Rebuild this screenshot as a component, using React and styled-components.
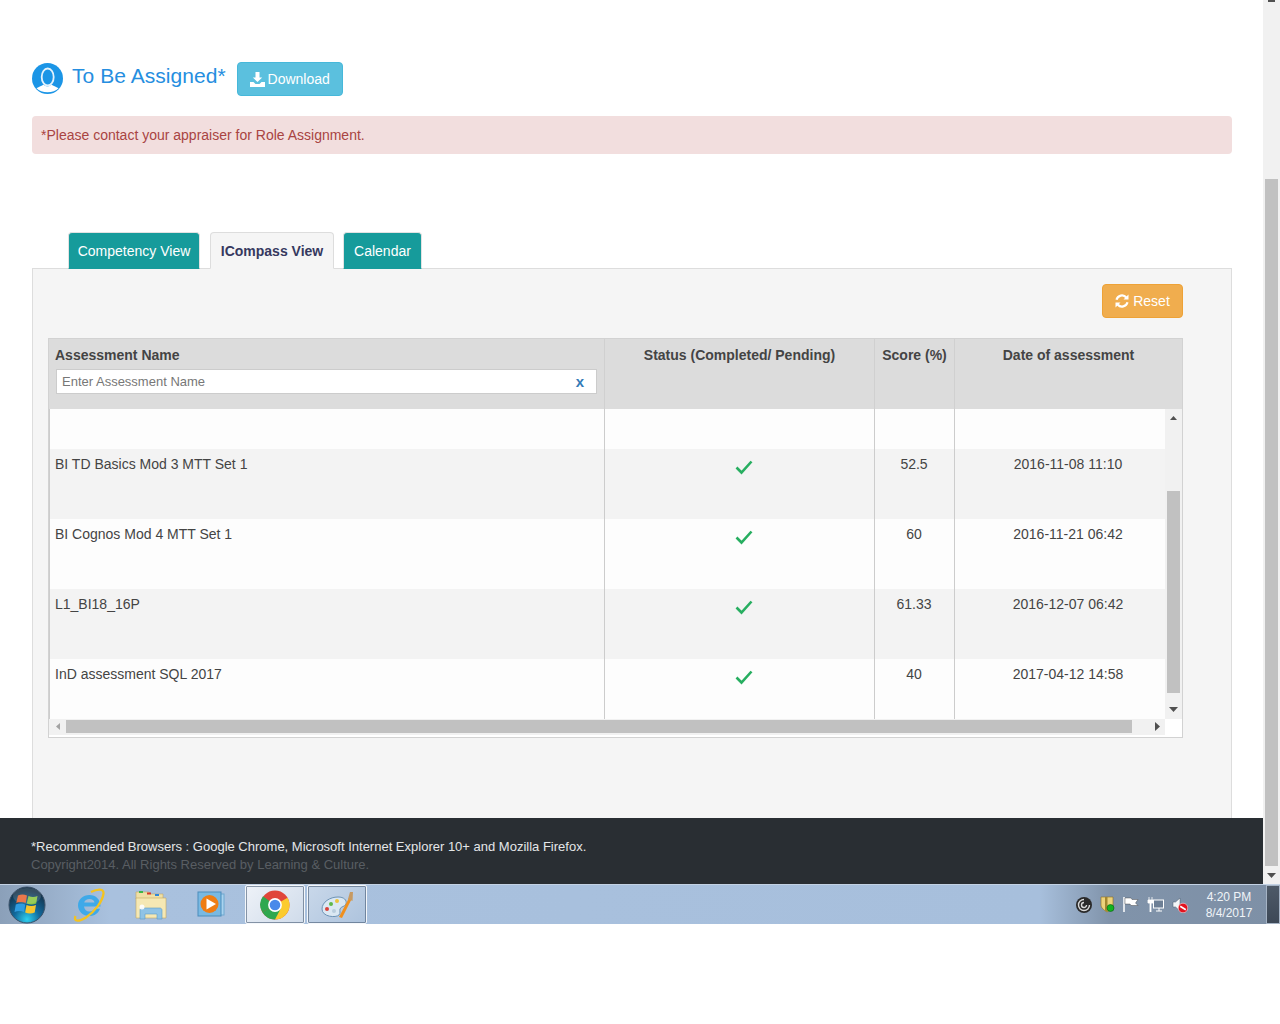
import React from 'react'
import styled, { createGlobalStyle } from 'styled-components'

const Global = createGlobalStyle`
  html, body { margin: 0; padding: 0; background: #fff; }
  body { font-family: "Liberation Sans", Arial, sans-serif; font-size: 14px; color: #333; }
`

const Screen = styled.div`
  width: 1280px;
  height: 1024px;
  display: flex;
  flex-direction: column;
  overflow: hidden;
  background: #fff;
`
const Viewport = styled.div`
  display: flex;
  height: 884px;
`
const Content = styled.main`
  width: 1263px;
  display: flex;
  flex-direction: column;
`
const Wrapper = styled.div`
  flex: 1;
  padding: 62px 31px 0 32px;
  display: flex;
  flex-direction: column;
`
const Heading = styled.div`
  display: flex;
  align-items: flex-start;
  height: 34px;
`
const Avatar = styled.svg`
  width: 31px;
  height: 31px;
  margin: 1px 9px 0 0;
`
const Title = styled.h2`
  margin: 1px 11px 0 0;
  font-size: 21px;
  line-height: 25px;
  font-weight: 400;
  letter-spacing: 0.05px;
  color: #258ee0;
`
const Button = styled.button`
  display: flex;
  align-items: center;
  justify-content: center;
  gap: ${p => p.$gap}px;
  height: 34px;
  width: ${p => p.$width}px;
  padding: 0;
  border-radius: 4px;
  border: 1px solid ${p => p.$border};
  background: ${p => p.$bg};
  color: #fff;
  font-family: inherit;
  font-size: 14px;
`
const Alert = styled.div`
  margin-top: 20px;
  height: 38px;
  box-sizing: border-box;
  padding: 0 9px;
  line-height: 38px;
  background: #f2dede;
  border-radius: 4px;
  color: #a94442;
`
const Tabs = styled.nav`
  display: flex;
  margin: 78px 0 -1px 36px;
  position: relative;
  height: 37px;
`
const Tab = styled.div`
  box-sizing: border-box;
  height: 37px;
  width: ${p => p.$width}px;
  margin-right: ${p => p.$gap}px;
  text-align: center;
  line-height: 37px;
  border-radius: 4px 4px 0 0;
  border: 1px solid ${p => (p.$active ? '#ddd' : '#e2e2e2')};
  border-bottom: 1px solid ${p => (p.$active ? '#f5f5f5' : '#169b9b')};
  background: ${p => (p.$active ? '#f5f5f5' : '#169b9b')};
  color: ${p => (p.$active ? '#36395f' : '#fff')};
  font-weight: ${p => (p.$active ? 700 : 400)};
`
const Panel = styled.section`
  flex: 1;
  box-sizing: border-box;
  background: #f5f5f5;
  border: 1px solid #ddd;
  border-bottom: 0;
  padding: 15px 48px 0 15px;
`
const PanelTools = styled.div`
  display: flex;
  justify-content: flex-end;
  margin-bottom: 20px;
`
const Table = styled.div`
  width: 1135px;
  height: 400px;
  box-sizing: border-box;
  border: 1px solid #d2d2d2;
  background: #fff;
`
const HeadRow = styled.div`
  display: grid;
  grid-template-columns: 556px 270px 80px 227px;
  height: 70px;
  background: #dcdcdc;
`
const HeadCell = styled.div`
  box-sizing: border-box;
  padding: 8px 6px 0;
  border-right: ${p => (p.$last ? '0' : '1px solid #d0d0d0')};
  text-align: ${p => (p.$left ? 'left' : 'center')};
  font-weight: 700;
  color: #444;
  line-height: 17px;
`
const Filter = styled.div`
  display: flex;
  align-items: center;
  justify-content: space-between;
  box-sizing: border-box;
  width: 541px;
  height: 25px;
  margin: 5px 0 0 1px;
  padding: 0 12px 0 5px;
  background: #fff;
  border: 1px solid #ccc;
  font-size: 13px;
  font-weight: 400;
  color: #777;
`
const Clear = styled.span`
  color: #337ab7;
  font-weight: 700;
  font-size: 15px;
`
const BodyWrap = styled.div`
  display: flex;
  height: 310px;
`
const Rows = styled.div`
  width: 1116px;
  border-left: 1px solid #ccc;
  box-sizing: border-box;
`
const Row = styled.div`
  display: grid;
  grid-template-columns: 555px 270px 80px 211px;
  height: ${p => p.$height}px;
  background: ${p => (p.$shade ? '#f3f3f3' : '#fdfdfd')};
`
const Cell = styled.div`
  box-sizing: border-box;
  padding: 5px 1px 0 0;
  padding-left: ${p => (p.$date ? '16px' : p.$status ? '10px' : p.$name ? '5px' : '0')};
  border-right: ${p => (p.$date ? '0' : '1px solid #ccc')};
  text-align: ${p => (p.$name ? 'left' : 'center')};
  line-height: 20px;
  color: #444;
`
const Check = styled.svg`
  width: 18px;
  height: 16px;
  margin-top: 5px;
`
const ScrollV = styled.div`
  width: ${p => p.$width}px;
  height: 100%;
  flex: none;
  background: #f1f1f1;
  display: flex;
  flex-direction: column;
  align-items: center;
`
const Thumb = styled.div`
  flex: none;
  background: #c1c1c1;
  width: ${p => p.$width || 'auto'};
  height: ${p => p.$height || 'auto'};
  margin: ${p => p.$margin || 0};
`
const ArrowBox = styled.div`
  display: flex;
  align-items: center;
  justify-content: center;
  flex: none;
  box-sizing: border-box;
  width: ${p => p.$width}px;
  height: ${p => p.$height}px;
  padding: ${p => p.$pad || 0};
`
const ScrollH = styled.div`
  display: flex;
  width: 1116px;
  height: 16px;
  background: #f1f1f1;
  align-items: flex-start;
`
const Tri = styled.svg`
  display: block;
  fill: ${p => p.$fill || '#505050'};
`
const Footer = styled.footer`
  height: 66px;
  box-sizing: border-box;
  background: #292e33;
  padding: 20px 31px 0;
  font-size: 13px;
  line-height: 18px;
  color: #e4e6e8;
`
const Copyright = styled.div`
  color: #595e63;
`
const PageScroll = styled(ScrollV)`
  height: 884px;
`
const Taskbar = styled.div`
  height: 40px;
  display: flex;
  align-items: stretch;
  background: linear-gradient(90deg, #8ba0b9 0, #a9c1de 110px, #a7bfdc 1040px, #8093aa 1110px, #7e90a6 100%);
  border-top: 1px solid #c3d2e4;
  box-sizing: border-box;
`
const Launcher = styled.div`
  width: ${p => p.$width}px;
  margin-left: ${p => p.$gap || 0}px;
  display: flex;
  align-items: center;
  justify-content: center;
  box-sizing: border-box;
  ${p => p.$open && `
    border: 1px solid #f4f7fb;
    border-radius: 2px;
    box-shadow: inset 0 0 0 1px rgba(70, 90, 115, .6);
    background: ${p.$open};
  `}
`
const StartButton = styled(Launcher)`
  justify-content: flex-start;
  padding-left: 8px;
`
const Tray = styled.div`
  margin-left: auto;
  display: flex;
  align-items: center;
  gap: 8px;
  padding-right: 6px;
`
const Clock = styled.div`
  width: 62px;
  margin-left: 2px;
  text-align: center;
  color: #f0f4f8;
  font-size: 12px;
  line-height: 16px;
`
const ShowDesktop = styled.div`
  width: 14px;
  box-sizing: border-box;
  border: 1px solid #a5b3c4;
  background: linear-gradient(180deg, #4e5a68, #3d4856);
`

const rows = [
  { name: 'BI TD Basics Mod 3 MTT Set 1', score: '52.5', date: '2016-11-08 11:10', height: 70, shade: true },
  { name: 'BI Cognos Mod 4 MTT Set 1', score: '60', date: '2016-11-21 06:42', height: 70 },
  { name: 'L1_BI18_16P', score: '61.33', date: '2016-12-07 06:42', height: 70, shade: true },
  { name: 'InD assessment SQL 2017', score: '40', date: '2017-04-12 14:58', height: 60 },
]

const UserIcon = () => (
  <Avatar viewBox="0 0 31 31">
    <circle cx="15.5" cy="15.5" r="15.5" fill="#1b95e6" />
    <ellipse cx="15.7" cy="14" rx="6" ry="8.500" fill="none" stroke="#e3f2fc" strokeWidth="1.800" />
    <path d="M11.500 21.500c-1.500 1.500-4.500 2-7 3.800C7 28 11 29.300 15.500 29.300s8.500-1.300 11-4C24 23.500 21 23 19.500 21.500c-1 1.200-2.500 2-4 2s-3-.8-4-2z" fill="#fff" />
  </Avatar>
)

const DownloadIcon = () => (
  <svg width="15" height="15" viewBox="0 0 15 15" fill="#fff">
    <path d="M5.500 0h4v5.500h2.700L7.500 10 2.800 5.500h2.700z" />
    <path d="M0 10h3.500l2 2h4l2-2H15v5H0z" />
  </svg>
)

const ResetIcon = () => (
  <svg width="14" height="14" viewBox="0 0 14 14" fill="none" stroke="#fff" strokeWidth="2.200">
    <path d="M1.500 5.700A5.600 5.600 0 0 1 11.300 3.500" />
    <path d="M12.500 8.300A5.600 5.600 0 0 1 2.700 10.500" />
    <path d="M13.500 0.500v5h-5z" fill="#fff" stroke="none" />
    <path d="M0.500 13.500v-5h5z" fill="#fff" stroke="none" />
  </svg>
)

const CheckIcon = () => (
  <Check viewBox="0 0 18 16">
    <path d="M1.500 8.500l5 5L16.500 2.500" fill="none" stroke="#27ae60" strokeWidth="2.600" />
  </Check>
)

const Up = () => <Tri width="7" height="4" viewBox="0 0 7 4"><path d="M3.500 0L7 4H0z" /></Tri>
const Down = () => <Tri width="9" height="5" viewBox="0 0 9 5"><path d="M0 0h9L4.500 5z" /></Tri>
const Left = () => <Tri $fill="#a3a3a3" width="4" height="7" viewBox="0 0 4 7"><path d="M4 0v7L0 3.500z" /></Tri>
const Right = () => <Tri width="5" height="9" viewBox="0 0 5 9"><path d="M0 0l5 4.500L0 9z" /></Tri>

const StartOrb = () => (
  <svg width="38" height="38" viewBox="0 0 38 38">
    <defs>
      <radialGradient id="orb" cx="50%" cy="90%" r="80%">
        <stop offset="0" stopColor="#2fd0ee" />
        <stop offset=".45" stopColor="#12699c" />
        <stop offset="1" stopColor="#143148" />
      </radialGradient>
    </defs>
    <circle cx="19" cy="19" r="18" fill="url(#orb)" stroke="#3c5168" />
    <path d="M10 9.500c3-1.500 6-1.500 9 0l-1.300 7.500c-3-1.300-6.500-1.300-9.500 0z" fill="#e8622e" />
    <path d="M20.500 10c3 1.300 6 1.300 9 0L28.200 17.500c-3 1.300-6.500 1.300-9.500 0z" fill="#86c43e" />
    <path d="M7.800 18.500c3-1.300 6.500-1.300 9.500 0L16 26c-3-1.300-6.500-1.300-9.500 0z" fill="#2f9ce0" />
    <path d="M18.500 19c3 1.300 6.500 1.300 9.500 0l-1.300 7.500c-3 1.300-6.500 1.300-9.500 0z" fill="#f7c52e" />
    <ellipse cx="19" cy="10" rx="14" ry="8" fill="#fff" opacity=".14" />
  </svg>
)

const IeIcon = () => (
  <svg width="34" height="36" viewBox="0 0 34 36">
    <path d="M17.500 8c6.500 0 11 4.500 11 11.500H12c.3 3 2.500 5 5.500 5 2.300 0 4-1 5-2.800h5.500c-1.500 4.500-5.500 7.300-10.800 7.300C11 29 6 24.300 6 18.500 6 12.500 11 8 17.500 8zm5 7.500C22.200 13.500 20.200 12 17.500 12s-4.800 1.500-5.300 3.500z" fill="#3fa9e8" />
    <path d="M3.500 29c-2.500 6.500 4 5.500 10.500 1.500C22.500 25 30.500 14.500 31.500 6.500 32 1.500 26 1.500 19 5" fill="none" stroke="#f4c31f" strokeWidth="2.300" />
  </svg>
)

const FolderIcon = () => (
  <svg width="32" height="30" viewBox="0 0 32 30">
    <path d="M1 2h13l2 2h12v5H1z" fill="#efe0a6" stroke="#c5aa62" strokeWidth=".6" />
    <rect x="4" y="1" width="4" height="2" fill="#3bb54a" />
    <rect x="12" y="2.500" width="4" height="2" fill="#d8392b" />
    <rect x="20" y="4" width="4" height="2" fill="#2f86d8" />
    <path d="M1 8h30v20H1z" fill="#f5e8b4" stroke="#c5aa62" strokeWidth=".6" />
    <path d="M5 29V20c0-1 1-2 2-2h18c1 0 2 1 2 2v9h-5v-5H10v5z" fill="#8fc3e6" stroke="#5c9bc8" strokeWidth=".6" />
    <circle cx="7" cy="17" r="2.500" fill="#fff" opacity=".9" />
  </svg>
)

const PlayerIcon = () => (
  <svg width="30" height="28" viewBox="0 0 30 28">
    <rect x="8" y="3" width="19" height="21" fill="#a9d3ef" stroke="#6fa8cf" />
    <rect x="1" y="1" width="23" height="24" fill="#79b9e2" stroke="#4d8dbb" />
    <circle cx="12.500" cy="13" r="9" fill="#ef7d14" />
    <path d="M9.500 7.500l9.500 5.500-9.500 5.500z" fill="#fff" />
  </svg>
)

const ChromeIcon = () => (
  <svg width="30" height="30" viewBox="0 0 30 30">
    <circle cx="15" cy="15" r="14.500" fill="#e0463a" />
    <path d="M15 15L2.400 22.300A14.500 14.500 0 0 1 3 6.200z" fill="#2fa84f" />
    <path d="M15 15l12.500-7.300A14.500 14.500 0 0 1 15 29.500z" fill="#fbcb2e" />
    <path d="M15 15l-12.600 7.300A14.500 14.500 0 0 0 15 29.500L21 18z" fill="#2fa84f" />
    <circle cx="15" cy="15" r="6.900" fill="#fff" />
    <circle cx="15" cy="15" r="5.300" fill="#4a89ea" />
  </svg>
)

const PaintIcon = () => (
  <svg width="34" height="32" viewBox="0 0 34 32">
    <path d="M2 20C2 13 10 8 18 8c6 0 9 3 8 7-1 3-5 2-6 5-.7 2 1 4-1 6-3 3-17 2-17-6z" fill="#dbe8f3" stroke="#6d93b5" />
    <circle cx="7" cy="20" r="2" fill="#d8423a" />
    <circle cx="11" cy="15" r="2" fill="#5eb84a" />
    <circle cx="17" cy="12" r="2" fill="#ecc33c" />
    <circle cx="14" cy="22" r="2" fill="#b9cddd" />
    <path d="M19 28L29 9l2.500 1.300L22 29z" fill="#ef8f1e" />
    <path d="M28 10l2-7 3 0-.5 9z" fill="#c79a62" />
  </svg>
)

const TargetIcon = () => (
  <svg width="16" height="16" viewBox="0 0 16 16">
    <circle cx="8" cy="8" r="8" fill="#2a2a2a" />
    <path d="M8 2.500A5.500 5.500 0 1 0 13.500 8M8 5.500A2.500 2.500 0 1 0 10.500 8" fill="none" stroke="#d8d8d8" strokeWidth="1.400" />
  </svg>
)
const ShieldIcon = () => (
  <svg width="15" height="17" viewBox="0 0 15 17">
    <path d="M1 1h12v8c0 3-3 5-6 7-3-2-6-4-6-7z" fill="#ecd27a" stroke="#8a6d20" strokeWidth=".6" />
    <path d="M5 1h2.500v15L5 14.500z" fill="#a3862f" />
    <circle cx="10.500" cy="12" r="3.500" fill="#12b31e" stroke="#075c0d" strokeWidth=".6" />
  </svg>
)
const FlagIcon = () => (
  <svg width="16" height="15" viewBox="0 0 16 15">
    <path d="M1 0v15" stroke="#fff" strokeWidth="1.500" />
    <path d="M2 1h6l1 1.500h6L12.500 6 15 8.500H8L7 7H2z" fill="#fff" stroke="#333" strokeWidth=".4" />
  </svg>
)
const NetworkIcon = () => (
  <svg width="17" height="15" viewBox="0 0 17 15">
    <path d="M2 0v3M5 0v3M1 3h5v3H4v9H3V6H1z" fill="#fff" stroke="#fff" strokeWidth=".8" />
    <rect x="6.500" y="3" width="10" height="8" fill="#6d7f95" stroke="#fff" />
    <path d="M9 14h6M12 11v3" stroke="#fff" />
  </svg>
)
const MuteIcon = () => (
  <svg width="16" height="16" viewBox="0 0 16 16">
    <path d="M1 5h2.500L8 1v13L3.500 10H1z" fill="#f4f6f8" stroke="#4a5a6c" strokeWidth=".5" />
    <circle cx="11" cy="11" r="4.800" fill="#e2131f" stroke="#fff" strokeWidth=".5" />
    <path d="M8.200 9.200l5.600 3.600" stroke="#fff" strokeWidth="1.700" />
  </svg>
)

function App() {
  return (
    <Screen>
      <Global />
      <Viewport>
        <Content>
          <Wrapper>
            <Heading>
              <UserIcon />
              <Title>To Be Assigned*</Title>
              <Button $width={106} $gap={3} $bg="#5bc0de" $border="#46b8da"><DownloadIcon />Download</Button>
            </Heading>
            <Alert>*Please contact your appraiser for Role Assignment.</Alert>
            <Tabs>
              <Tab $width={132} $gap={10}>Competency View</Tab>
              <Tab $width={124} $gap={9} $active>ICompass View</Tab>
              <Tab $width={79} $gap={0}>Calendar</Tab>
            </Tabs>
            <Panel>
              <PanelTools>
                <Button $width={81} $gap={4} $bg="#f0ad4e" $border="#eea236"><ResetIcon />Reset</Button>
              </PanelTools>
              <Table>
                <HeadRow>
                  <HeadCell $left>
                    Assessment Name
                    <Filter>Enter Assessment Name<Clear>x</Clear></Filter>
                  </HeadCell>
                  <HeadCell>Status (Completed/ Pending)</HeadCell>
                  <HeadCell>Score (%)</HeadCell>
                  <HeadCell $last>Date of assessment</HeadCell>
                </HeadRow>
                <BodyWrap>
                  <Rows>
                    <Row $height={40}>
                      <Cell $name />
                      <Cell $status />
                      <Cell />
                      <Cell $date />
                    </Row>
                    {rows.map(r => (
                      <Row key={r.name} $height={r.height} $shade={r.shade}>
                        <Cell $name>{r.name}</Cell>
                        <Cell $status><CheckIcon /></Cell>
                        <Cell>{r.score}</Cell>
                        <Cell $date>{r.date}</Cell>
                      </Row>
                    ))}
                  </Rows>
                  <ScrollV $width={17}>
                    <ArrowBox $width={17} $height={17}><Up /></ArrowBox>
                    <Thumb $width="13px" $height="202px" $margin="65px 0 0" />
                    <ArrowBox $width={17} $height={26} $pad="6px 0 0"><Down /></ArrowBox>
                  </ScrollV>
                </BodyWrap>
                <ScrollH>
                  <ArrowBox $width={17} $height={15}><Left /></ArrowBox>
                  <Thumb $width="1066px" $height="13px" $margin="1px 0 0" />
                  <ArrowBox $width={33} $height={15} $pad="0 0 0 17px"><Right /></ArrowBox>
                </ScrollH>
              </Table>
            </Panel>
          </Wrapper>
          <Footer>
            <div>*Recommended Browsers : Google Chrome, Microsoft Internet Explorer 10+ and Mozilla Firefox.</div>
            <Copyright>Copyright2014. All Rights Reserved by Learning &amp; Culture.</Copyright>
          </Footer>
        </Content>
        <PageScroll $width={17}>
          <ArrowBox $width={17} $height={2}><Tri width="7" height="2" viewBox="0 0 7 2"><path d="M0 0h7v2H0z" /></Tri></ArrowBox>
          <Thumb $width="13px" $height="687px" $margin="177px 0 0" />
          <ArrowBox $width={17} $height={18}><Down /></ArrowBox>
        </PageScroll>
      </Viewport>
      <Taskbar>
        <StartButton $width={58}><StartOrb /></StartButton>
        <Launcher $width={62}><IeIcon /></Launcher>
        <Launcher $width={62}><FolderIcon /></Launcher>
        <Launcher $width={60}><PlayerIcon /></Launcher>
        <Launcher $width={60} $gap={3} $open="linear-gradient(135deg, #eef2f8, #cfdbea)"><ChromeIcon /></Launcher>
        <Launcher $width={60} $gap={2} $open="linear-gradient(135deg, #c9d8ea, #adc3dd)"><PaintIcon /></Launcher>
        <Tray>
          <TargetIcon />
          <ShieldIcon />
          <FlagIcon />
          <NetworkIcon />
          <MuteIcon />
          <Clock>4:20 PM<br />8/4/2017</Clock>
        </Tray>
        <ShowDesktop />
      </Taskbar>
    </Screen>
  )
}

export default App
